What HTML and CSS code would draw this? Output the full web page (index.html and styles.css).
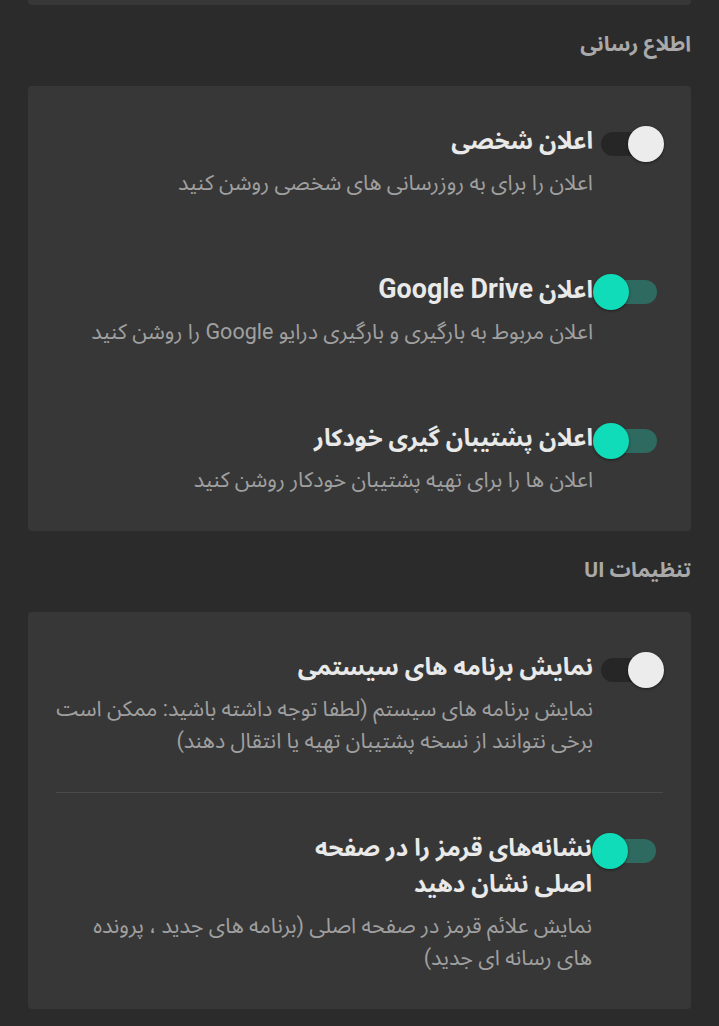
FILE: index.html
```html
<!DOCTYPE html>
<html lang="fa" dir="rtl">
  <head>
    <meta charset="UTF-8" />
    <meta name="viewport" content="width=device-width, initial-scale=1.0" />
    <title>تنظیمات</title>
    <link rel="stylesheet" href="styles.css">
  </head>
  <body>
    <div class="settingsPage">
      <div class="prefCard cardTail"></div>

      <h3 class="sectionTitle">اطلاع رسانی</h3>
      <div class="prefCard">
        <div class="prefRow">
          <div class="switch"><span class="track"></span><span class="thumb"></span></div>
          <div class="prefText">
            <div class="prefTitle">اعلان شخصی</div>
            <div class="prefSummary">اعلان را برای به روزرسانی های شخصی روشن کنید</div>
          </div>
        </div>
        <div class="prefRow">
          <div class="switch on"><span class="track"></span><span class="thumb"></span></div>
          <div class="prefText">
            <div class="prefTitle">اعلان <span class="latin">Google Drive</span></div>
            <div class="prefSummary">اعلان مربوط به بارگیری و بارگیری درایو Google را روشن کنید</div>
          </div>
        </div>
        <div class="prefRow">
          <div class="switch on"><span class="track"></span><span class="thumb"></span></div>
          <div class="prefText">
            <div class="prefTitle">اعلان پشتیبان گیری خودکار</div>
            <div class="prefSummary">اعلان ها را برای تهیه پشتیبان خودکار روشن کنید</div>
          </div>
        </div>
      </div>

      <h3 class="sectionTitle">تنظیمات UI</h3>
      <div class="prefCard">
        <div class="prefRow">
          <div class="switch"><span class="track"></span><span class="thumb"></span></div>
          <div class="prefText">
            <div class="prefTitle">نمایش برنامه های سیستمی</div>
            <div class="prefSummary">نمایش برنامه های سیستم (لطفا توجه داشته باشید: ممکن است برخی نتوانند از نسخه پشتیبان تهیه یا انتقال دهند)</div>
          </div>
        </div>
        <div class="prefRow divided">
          <div class="switch on"><span class="track"></span><span class="thumb"></span></div>
          <div class="prefText">
            <div class="prefTitle">نشانه‌های قرمز را در صفحه اصلی نشان دهید</div>
            <div class="prefSummary">نمایش علائم قرمز در صفحه اصلی (برنامه های جدید ، پرونده<br>های رسانه ای جدید)</div>
          </div>
        </div>
      </div>
    </div>
  </body>
</html>
```

FILE: styles.css
```css
body {
  margin: 0;
  background-color: #2b2b2b;
  font-family: "Roboto", "Noto Sans Arabic", "DejaVu Sans", sans-serif;
}
.settingsPage {
  display: flex;
  flex-direction: column;
  padding: 0 28px;
}
.prefCard {
  background: #373737;
  border-radius: 4px;
}
.cardTail {
  height: 5px;
  border-radius: 0 0 4px 4px;
}
.sectionTitle {
  margin: 0;
  padding: 27px 0 30px;
  font-size: 21px;
  line-height: 24px;
  font-weight: bold;
  color: #a9a9a9;
}
.prefRow {
  display: flex;
  align-items: flex-start;
  padding: 37px 27px 35px 12px;
}
.prefRow.divided {
  border-top: 1px solid #4a4a4a;
  margin: 0 28px;
  padding-right: 0;
  padding-left: 0;
}
.prefText {
  flex: 1;
  display: flex;
  flex-direction: column;
}
.prefTitle {
  max-width: 310px;
  font-size: 24px;
  line-height: 36px;
  font-weight: bold;
  color: #e9e9e9;
}
.prefTitle .latin {
  font-size: 1.12em;
}
.prefSummary {
  margin-top: 8px;
  font-size: 21.5px;
  line-height: 32px;
  color: #a0a0a0;
}
.switch {
  position: relative;
  flex: none;
  width: 71px;
  height: 36px;
  margin-top: 3px;
}
.switch .track {
  position: absolute;
  top: 6px;
  left: 8px;
  width: 56px;
  height: 24px;
  border-radius: 12px;
  background: #262626;
}
.switch .thumb {
  position: absolute;
  top: 0;
  right: 0;
  width: 36px;
  height: 36px;
  border-radius: 50%;
  background: #ececec;
  box-shadow: 0 1px 3px rgba(0, 0, 0, 0.45);
}
.switch.on .track {
  background: #2e6a5f;
}
.switch.on .thumb {
  right: auto;
  left: 0;
  background: #10dcb9;
}
```
